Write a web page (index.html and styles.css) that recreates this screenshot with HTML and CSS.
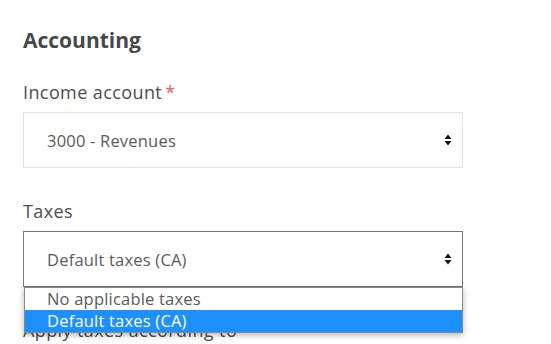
FILE: index.html
```html
<!DOCTYPE html>
<html>
<head>
<meta charset="utf-8">
<link rel="stylesheet" href="styles.css">
</head>
<body>
<div class="page">
  <h2 class="title">Accounting</h2>
  <div class="field">
    <label class="label">Income account<span class="req">*</span></label>
    <div class="select">
      <span class="value">3000 - Revenues</span>
      <svg class="arrows" width="8" height="12" viewBox="0 0 8 12"><path d="M4 0.5 L7.5 5 H0.5 Z M4 11.5 L7.5 7 H0.5 Z" fill="#111"/></svg>
    </div>
  </div>
  <div class="field">
    <label class="label">Taxes</label>
    <div class="select-wrap">
      <div class="select open">
        <span class="value">Default taxes (CA)</span>
        <svg class="arrows" width="8" height="12" viewBox="0 0 8 12"><path d="M4 0.5 L7.5 5 H0.5 Z M4 11.5 L7.5 7 H0.5 Z" fill="#111"/></svg>
      </div>
      <ul class="menu">
        <li class="opt">No applicable taxes</li>
        <li class="opt active">Default taxes (CA)</li>
      </ul>
    </div>
  </div>
  <div class="field">
    <label class="label">Apply taxes according to</label>
  </div>
</div>
</body>
</html>
```
FILE: styles.css
```css
html, body { margin: 0; padding: 0; background: #fff; }
body { font-family: "Open Sans", "Noto Sans", sans-serif; color: #4f4f4f; overflow: hidden; }
.page { padding: 27px 0 0 23px; width: 440px; }
.title { margin: 0; font-size: 21px; font-weight: 700; line-height: 26px; color: #484848; }
.field { margin-top: 28px; }
.field + .field { margin-top: 32px; }
.label { display: block; font-size: 18px; line-height: 22px; color: #4d4d4d; margin-bottom: 9px; letter-spacing: 0.4px; }
.req { color: #f05a5a; margin-left: 3px; }
.select { height: 54px; border: 1px solid #dde3ec; display: flex; align-items: center; justify-content: space-between; padding: 0 10px 0 23px; }
.select.open { border-color: #767676; }
.value { font-size: 16.5px; color: #5a5a5a; letter-spacing: 0.2px; }
.arrows { display: block; }
.select-wrap { position: relative; }
.menu { position: absolute; left: 1px; right: 0; top: 56px; margin: 0; padding: 0; list-style: none; background: #fff; border: 1px solid #8a8a8a; box-shadow: 0 2px 6px rgba(0,0,0,0.3); z-index: 2; }
.opt { height: 22px; line-height: 21px; font-size: 16.5px; color: #5a5a5a; padding-left: 22px; letter-spacing: 0.2px; }
.opt.active { background: #1e8fff; color: #fff; }
```
